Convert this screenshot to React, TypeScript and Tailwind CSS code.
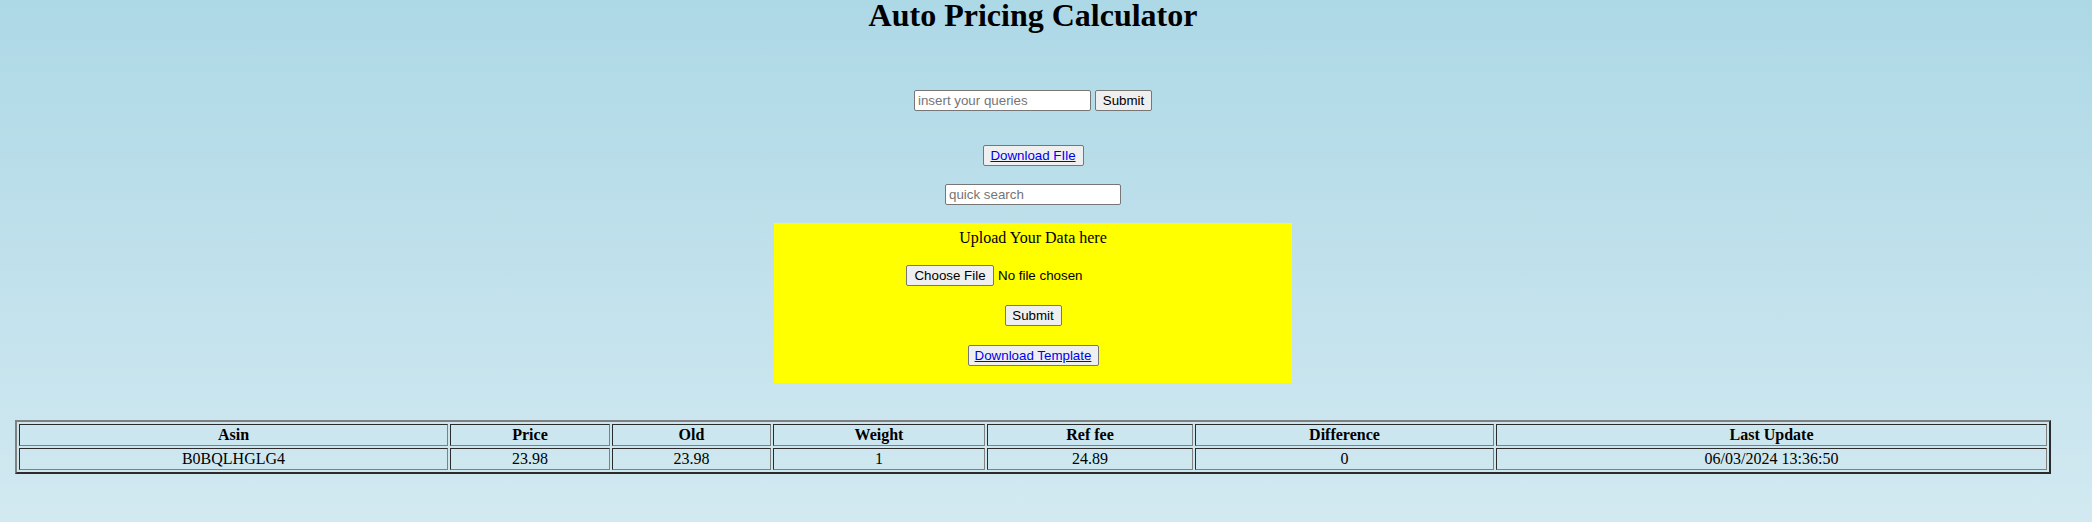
import React from 'react';

const columns = [
  { label: 'Asin', width: 'w-[429px]' },
  { label: 'Price', width: 'w-[160px]' },
  { label: 'Old', width: 'w-[159px]' },
  { label: 'Weight', width: 'w-[212px]' },
  { label: 'Ref fee', width: 'w-[206px]' },
  { label: 'Difference', width: 'w-[299px]' },
  { label: 'Last Update', width: 'w-[551px]' },
];

const rows = [['B0BQLHGLG4', '23.98', '23.98', '1', '24.89', '0', '06/03/2024 13:36:50']];

const cell =
  "h-[22px] p-[1px] text-center text-[16px] leading-[18px] border border-t-[#2b2b2b] border-l-[#2b2b2b] border-b-[#808080] border-r-[#808080]";

const btn =
  "h-[21px] rounded-[2px] border border-[#767676] bg-[#efefef] text-[13.333px] leading-[17px] text-black font-['Liberation_Sans',Arial,sans-serif]";

const field =
  "h-[21px] rounded-[2px] border border-[#767676] bg-white px-[3px] text-[13.333px] text-black placeholder:text-[#757575] font-['Liberation_Sans',Arial,sans-serif] outline-none";

export default function App() {
  return (
    <div className="min-h-screen w-full bg-gradient-to-b from-[#add8e6] to-[#d2e9f1] font-['Liberation_Serif','Times_New_Roman',serif] text-black">
      <div className="w-[2066px] flex flex-col items-center">
        <h1 className="m-0 text-[32px] leading-[30px] font-bold">Auto Pricing Calculator</h1>

        <div className="mt-[60px] flex items-center gap-[4px]">
          <input className={`${field} w-[177px]`} placeholder="insert your queries" />
          <button className={`${btn} w-[57px]`}>Submit</button>
        </div>

        <button className={`${btn} mt-[34px] w-[101px]`}>
          <a href="#" className="text-[#0000ee] underline">Download FIle</a>
        </button>

        <input className={`${field} mt-[18px] w-[176px]`} placeholder="quick search" />

        <div className="mt-[18px] w-[518px] h-[160px] bg-[#ffff00] flex flex-col items-center pt-[6px]">
          <p className="text-[16px] leading-[18px]">Upload Your Data here</p>
          <div className="mt-[18px] w-[254px] flex items-center gap-[4px]">
            <button className={`${btn} w-[88px]`}>Choose File</button>
            <span className="text-[13.333px] font-['Liberation_Sans',Arial,sans-serif]">No file chosen</span>
          </div>
          <button className={`${btn} mt-[19px] w-[57px]`}>Submit</button>
          <button className={`${btn} mt-[19px] w-[131px]`}>
            <a href="#" className="text-[#0000ee] underline">Download Template</a>
          </button>
        </div>

        <table className="mt-[37px] w-[2036px] table-fixed border-separate border-spacing-[2px] border-2 border-t-[#808080] border-l-[#808080] border-b-[#2b2b2b] border-r-[#2b2b2b]">
          <thead>
            <tr>
              {columns.map((c) => (
                <th key={c.label} className={`${cell} ${c.width} font-bold`}>{c.label}</th>
              ))}
            </tr>
          </thead>
          <tbody>
            {rows.map((r, i) => (
              <tr key={i}>
                {r.map((v, j) => (
                  <td key={j} className={cell}>{v}</td>
                ))}
              </tr>
            ))}
          </tbody>
        </table>
      </div>
    </div>
  );
}
